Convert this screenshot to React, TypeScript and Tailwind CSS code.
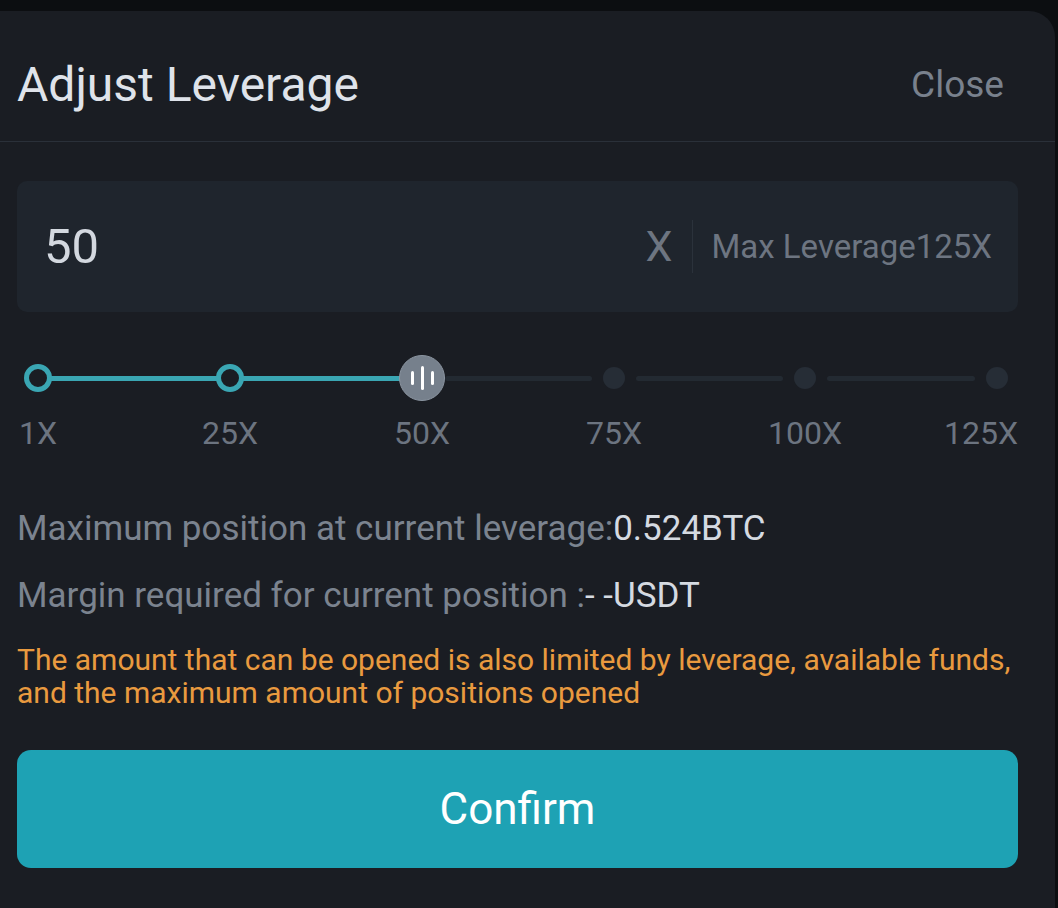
import { useState } from "react";

// x positions are relative to the content column (which starts at 17px)
const marks = [
  { label: "1X", x: 21 },
  { label: "25X", x: 213 },
  { label: "50X", x: 405 },
  { label: "75X", x: 597 },
  { label: "100X", x: 788 },
  { label: "125X", x: 980 },
];

function LeverageSlider({ value }: { value: number }) {
  const activeIndex = marks.findIndex((m) => m.label === `${value}X`);
  const knobX = marks[activeIndex].x;

  return (
    <div className="relative h-[100px] w-full">
      {/* active track */}
      <div
        className="absolute top-[21px] h-[5px] rounded-full bg-[#3aa6b3]"
        style={{ left: marks[0].x, width: knobX - marks[0].x }}
      />
      {/* inactive segments */}
      {marks.slice(activeIndex).map((m, i, arr) => {
        const next = arr[i + 1];
        if (!next) return null;
        const start = m.x + (i === 0 ? 23 : 22);
        const end = next.x - 22;
        return (
          <div
            key={m.label}
            className="absolute top-[21px] h-[5px] rounded-full bg-[#232a32]"
            style={{ left: start, width: end - start }}
          />
        );
      })}
      {marks.map((m, i) => {
        if (i < activeIndex) {
          return (
            <div
              key={m.label}
              className="absolute top-[9px] h-[28px] w-[28px] -translate-x-1/2 rounded-full border-[5px] border-[#3aa6b3] bg-[#1a1d23]"
              style={{ left: m.x }}
            />
          );
        }
        if (i === activeIndex) {
          return (
            <div
              key={m.label}
              className="absolute top-0 flex h-[46px] w-[46px] -translate-x-1/2 items-center justify-center gap-[7px] rounded-full border border-[#8b95a1] bg-[#76808c]"
              style={{ left: m.x }}
            >
              <span className="h-[14px] w-[3px] rounded-full bg-white" />
              <span className="h-[24px] w-[3px] rounded-full bg-white" />
              <span className="h-[14px] w-[3px] rounded-full bg-white" />
            </div>
          );
        }
        return (
          <div
            key={m.label}
            className="absolute top-[12px] h-[22px] w-[22px] -translate-x-1/2 rounded-full bg-[#262d36]"
            style={{ left: m.x }}
          />
        );
      })}
      {marks.map((m, i) => (
        <span
          key={m.label + "-l"}
          className={
            "absolute top-[62px] text-[32px] leading-none text-[#6c7480] " +
            (i === marks.length - 1 ? "right-0" : "-translate-x-1/2")
          }
          style={i === marks.length - 1 ? undefined : { left: m.x }}
        >
          {m.label}
        </span>
      ))}
    </div>
  );
}

export default function App() {
  const [leverage] = useState(50);

  return (
    <div
      className="h-[908px] w-[1058px] overflow-hidden bg-[#0c0e11] pt-[11px]"
      style={{ fontFamily: "Roboto, 'Noto Sans', sans-serif" }}
    >
      <div className="h-full w-[1055px] rounded-tr-[26px] bg-[#1a1d23]">
        <div className="flex h-[131px] items-center justify-between border-b border-[#2a3039] pl-[17px] pr-[51px] pt-[18px]">
          <h1 className="text-[48px] font-normal text-[#dfe3ea]">Adjust Leverage</h1>
          <button type="button" className="text-[37px] text-[#79818d]">
            Close
          </button>
        </div>

        <div className="pl-[17px] pr-[37px]">
          <div className="mt-[39px] flex h-[131px] items-center rounded-[10px] bg-[#1f252d] pl-[27px] pr-[26px]">
            <span className="flex-1 text-[49px] text-[#d3d8df]">{leverage}</span>
            <span className="text-[43px] text-[#6d7581]">X</span>
            <span className="mx-[19px] h-[53px] w-px bg-[#2b323b]" />
            <span className="text-[33px] text-[#6d7581]">Max Leverage125X</span>
          </div>

          <div className="mt-[43px]">
            <LeverageSlider value={leverage} />
          </div>

          <div className="mt-[52px] flex flex-col gap-[23px]">
            <p className="text-[35px] leading-[44px] text-[#7b838f]">
              Maximum position at current leverage:
              <span className="text-[#d5dae1]">0.524BTC</span>
            </p>
            <p className="text-[35px] leading-[44px] text-[#7b838f]">
              Margin required for current position :
              <span className="text-[#d5dae1]">- -USDT</span>
            </p>
          </div>

          <p className="mt-[25px] text-[30px] leading-[33px] text-[#e99a3f]">
            The amount that can be opened is also limited by leverage, available funds, and the
            maximum amount of positions opened
          </p>

          <button
            type="button"
            className="mt-[41px] flex h-[118px] w-full items-center justify-center rounded-[14px] bg-[#1ea2b4] text-[44px] text-white"
          >
            Confirm
          </button>
        </div>
      </div>
    </div>
  );
}
